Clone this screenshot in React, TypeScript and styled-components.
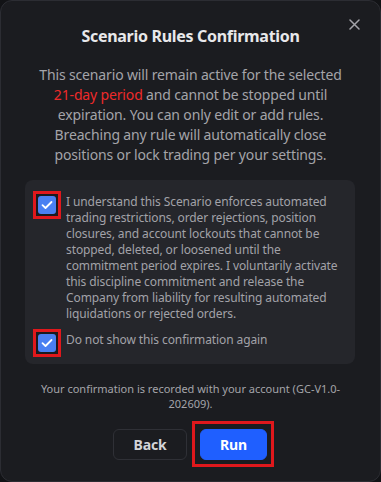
import React from "react";
import styled, { createGlobalStyle } from "styled-components";

const GlobalStyle = createGlobalStyle`
  html, body { margin: 0; padding: 0; background: #121316; }
  body { font-family: "Noto Sans", "Open Sans", sans-serif; }
  * { box-sizing: border-box; }
`;

const Card = styled.div`
  position: relative;
  width: 381px;
  height: 482px;
  background: #1b1c20;
  border: 1px solid #2c2d33;
  border-radius: 12px;
  padding: 23px 24px 0 24px;
  display: flex;
  flex-direction: column;
  align-items: stretch;
`;

const CloseButton = styled.button`
  position: absolute;
  top: 15px;
  right: 18px;
  width: 16px;
  height: 16px;
  padding: 0;
  border: none;
  background: transparent;
  color: #a4a4aa;
  display: flex;
  align-items: center;
  justify-content: center;
`;

const Title = styled.h2`
  margin: 0;
  font-size: 16px;
  line-height: 24px;
  font-weight: 700;
  letter-spacing: -0.3px;
  color: #e8e8ea;
  text-align: center;
`;

const Lead = styled.p`
  margin: 17px 0 0 0;
  padding: 0 8px;
  font-size: 14px;
  line-height: 20px;
  letter-spacing: -0.15px;
  color: #a4a4a9;
  text-align: center;
`;

const Highlight = styled.span`
  color: #ee2a2a;
`;

const Consent = styled.div`
  margin: 15px 1px 0 0;
  background: #25262b;
  border-radius: 8px;
  padding: 11px 12px 7px 8px;
  display: flex;
  flex-direction: column;
  gap: 7px;
`;

const CheckRow = styled.label`
  display: flex;
  align-items: flex-start;
  gap: 5px;
  font-size: 12px;
  line-height: 16px;
  letter-spacing: -0.1px;
  color: #a2a2a8;
`;

const RowText = styled.span`
  margin-top: 3px;
`;

const Marker = styled.span`
  flex: 0 0 auto;
  display: inline-flex;
  border: 3px solid #e0181c;
  padding: 2px;
  background: #1a1b1f;
`;

const Box = styled.span`
  width: 18px;
  height: 18px;
  border-radius: 3px;
  background: #4a80f2;
  display: flex;
  align-items: center;
  justify-content: center;
`;

const Note = styled.p`
  margin: 17px 0 0 0;
  font-size: 11px;
  line-height: 15px;
  color: #a4a4a9;
  text-align: center;
  padding: 0 14px;
`;

const Actions = styled.div`
  margin: 10px 0 0 6px;
  display: flex;
  justify-content: center;
  align-items: center;
  gap: 5px;
`;

const ButtonFrame = styled.span`
  display: inline-flex;
  border: 3px solid #e0181c;
  padding: 5px 4px 4px 5px;
`;

const Button = styled.button<{ $primary?: boolean }>`
  width: ${(p) => (p.$primary ? "67px" : "74px")};
  height: 31px;
  padding: 0;
  border-radius: 6px;
  font-family: "Noto Sans", sans-serif;
  font-size: 14px;
  font-weight: 700;
  letter-spacing: -0.2px;
  color: ${(p) => (p.$primary ? "#ffffff" : "#d4d4d8")};
  background: ${(p) => (p.$primary ? "#1f5fff" : "transparent")};
  border: 1px solid ${(p) => (p.$primary ? "#1f5fff" : "#2f3036")};
`;

const Check = () => (
  <svg width="12" height="10" viewBox="0 0 12 10" fill="none">
    <path d="M1.5 5.2 L4.5 8 L10.5 2" stroke="#ffffff" strokeWidth="1.8" strokeLinecap="round" strokeLinejoin="round" />
  </svg>
);

const CheckMark = () => (
  <Marker>
    <Box>
      <Check />
    </Box>
  </Marker>
);

export default function App() {
  return (
    <>
      <GlobalStyle />
      <Card>
        <CloseButton aria-label="Close">
          <svg width="11" height="11" viewBox="0 0 11 11">
            <path d="M1 1 L10 10 M10 1 L1 10" stroke="currentColor" strokeWidth="1.5" strokeLinecap="round" />
          </svg>
        </CloseButton>
        <Title>Scenario Rules Confirmation</Title>
        <Lead>
          This scenario will remain active for the selected <Highlight>21-day period</Highlight> and cannot be
          stopped until expiration. You can only edit or add rules. Breaching any rule will automatically close
          positions or lock trading per your settings.
        </Lead>
        <Consent>
          <CheckRow>
            <CheckMark />
            <RowText>
              I understand this Scenario enforces automated trading restrictions, order rejections, position
              closures, and account lockouts that cannot be stopped, deleted, or loosened until the commitment
              period expires. I voluntarily activate this discipline commitment and release the Company from
              liability for resulting automated liquidations or rejected orders.
            </RowText>
          </CheckRow>
          <CheckRow>
            <CheckMark />
            <RowText>Do not show this confirmation again</RowText>
          </CheckRow>
        </Consent>
        <Note>Your confirmation is recorded with your account (GC-V1.0-202609).</Note>
        <Actions>
          <Button>Back</Button>
          <ButtonFrame>
            <Button $primary>Run</Button>
          </ButtonFrame>
        </Actions>
      </Card>
    </>
  );
}
